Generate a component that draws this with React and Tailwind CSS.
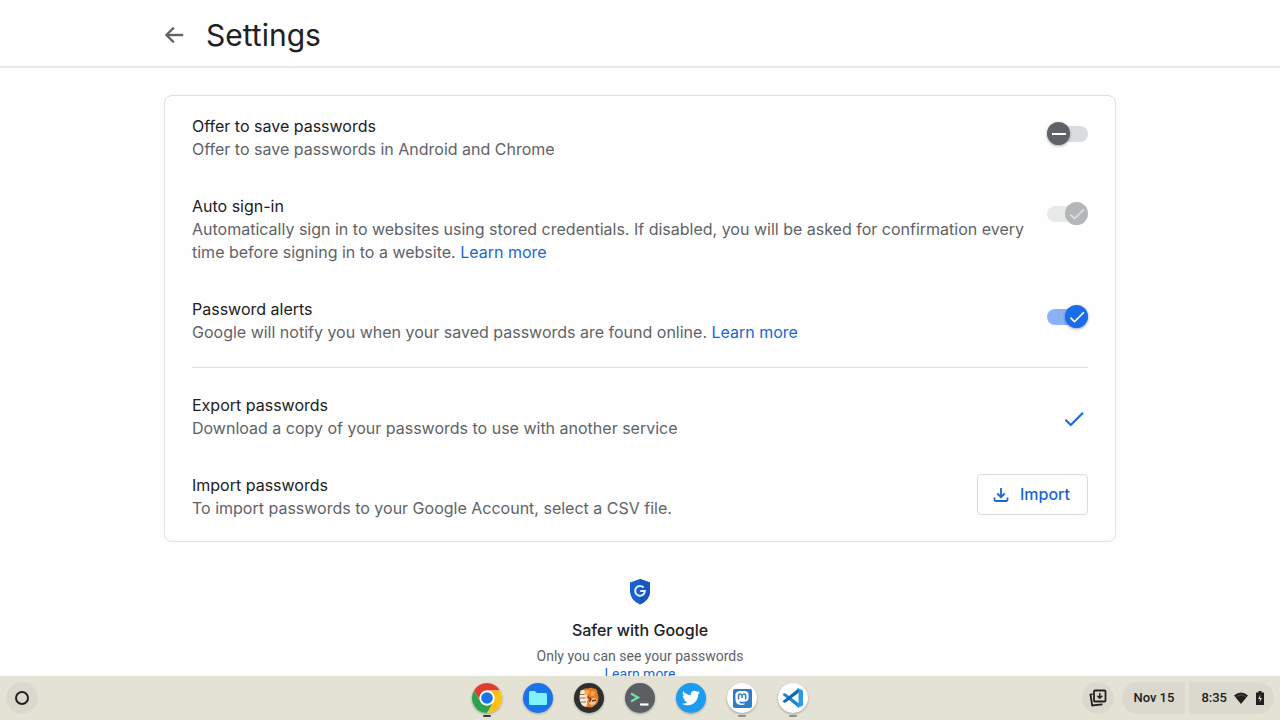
import React from "react";
import { SiMastodon } from "react-icons/si";
import { FaTwitter } from "react-icons/fa";

function Check({ className }) {
  return (
    <svg viewBox="0 0 24 24" className={className} fill="currentColor" aria-hidden="true">
      <path d="M9 16.17 4.83 12l-1.42 1.41L9 19 21 7l-1.41-1.41z" />
    </svg>
  );
}

function Toggle({ id, checked, disabled }) {
  let track = "bg-[#dadce0]";
  let thumb = "left-0 bg-[#5f6368] text-white shadow-[0_1px_3px_rgba(0,0,0,0.35)]";
  if (disabled) {
    track = "bg-[#e8eaea]";
    thumb = "right-0 bg-[#b5b6b8] text-[#dfe0e1]";
  } else if (checked) {
    track = "bg-[#8ab0f6]";
    thumb = "right-0 bg-[#1a6de8] text-white shadow-[0_1px_3px_rgba(0,0,0,0.35)]";
  }
  return (
    <span className="relative mt-[7px] flex h-[23px] w-[41px] shrink-0 items-center">
      <span className={"h-4 flex-1 rounded-full " + track} />
      <span className={"absolute top-0 flex size-[23px] items-center justify-center rounded-full " + thumb}>
        {checked ? <Check className="size-5" /> : <span className="h-[2px] w-3.5 bg-white" />}
      </span>
      <input
        id={id}
        type="checkbox"
        role="switch"
        defaultChecked={checked}
        disabled={disabled}
        className="absolute inset-0 size-full opacity-0"
      />
    </span>
  );
}

function Row({ title, id, children, action }) {
  return (
    <div className="flex justify-between gap-5 py-[17px] text-base leading-[23px]">
      <div>
        {id ? (
          <label htmlFor={id} className="block text-[#202124]">{title}</label>
        ) : (
          <h2 className="text-[#202124]">{title}</h2>
        )}
        <p className="text-[#5f6368]">{children}</p>
      </div>
      {action}
    </div>
  );
}

function LearnMore() {
  return <a href="#learn" className="text-[#1967d2]">Learn more</a>;
}

function ChromeLogo() {
  return (
    <svg viewBox="0 0 32 32" className="size-full">
      <circle cx="16" cy="16" r="15" fill="#fff" />
      <path d="M3 8.5A15 15 0 0 1 29 8.5H16a7.5 7.5 0 0 0-6.5 11.2z" fill="#e33b2e" />
      <path d="M29 8.5A15 15 0 0 1 16 31l6.5-11.3A7.5 7.5 0 0 0 16 8.5z" fill="#fbc116" />
      <path d="M16 31A15 15 0 0 1 3 8.5l6.5 11.2a7.5 7.5 0 0 0 13 0z" fill="#2da14c" />
      <circle cx="16" cy="16" r="7.5" fill="#fff" />
      <circle cx="16" cy="16" r="5.8" fill="#1a73e8" />
    </svg>
  );
}

function FilesLogo() {
  return (
    <svg viewBox="0 0 32 32" className="size-full">
      <circle cx="16" cy="16" r="15" fill="#1a73e8" />
      <path d="M7 10.500Q7 9 8.500 9H13l2 2h8.500q1.500 0 1.500 1.500v9q0 1.500-1.500 1.500h-15Q7 23 7 21.500z" fill="#7df3fa" />
    </svg>
  );
}

function BandicootLogo() {
  return (
    <svg viewBox="0 0 32 32" className="size-full">
      <circle cx="16" cy="16" r="15" fill="#2d2e30" />
      <path d="M9 8q3-2.500 6-1.500 3-1.500 5 0 3-.5 4 2 .500 3 1.500 6 .5 5-2.500 8l-4 3-7-.500-3-3z" fill="#e87a22" />
      <path d="M12.500 8.500q3-1.500 4.500 1l-2.500 4-3-1zM18 9.500q3-1.500 4 1l-1.500 3-3 .500z" fill="#f8a94e" />
      <path d="M7.500 8.500q3-1 4.500.500l-.500 3.500H14l-.500 3.500 1.500.500-1 3.500h.500l-1 4.500q-3.500.500-5-2L7 19l-.500-4z" fill="#f4e9dc" />
      <path d="m17 17 5-1.500 2 2-2 4.500-3.500 1.500-2.500-2z" fill="#efc5a3" />
      <path d="M7 12.500h4.500M7 16h5.500M8 20h5" stroke="#a8673d" strokeWidth="1" />
      <path d="m15 15 3 2-1.500 3M19 19l4-1" stroke="#6e2f16" strokeWidth="1.300" fill="none" />
    </svg>
  );
}

function TerminalLogo() {
  return (
    <svg viewBox="0 0 32 32" className="size-full" fill="none">
      <circle cx="16" cy="16" r="15" fill="#5b5f63" />
      <path d="m7 11.500 7 4-7 4" stroke="#6fdfa5" strokeWidth="2.200" />
      <path d="M16 22.500h8.500" stroke="#fff" strokeWidth="2.200" />
    </svg>
  );
}

function CodeLogo() {
  return (
    <svg viewBox="0 0 32 32" className="size-full">
      <circle cx="16" cy="16" r="15" fill="#fff" />
      <path d="m5.500 12.800 1.600-1.500 1.500.100L22 21.500V26z" fill="#1b85cf" />
      <path d="m5.500 19.200 1.600 1.500 1.500-.100L22 10.500V6z" fill="#0b6bb4" />
      <path d="m20.500 6 5.500 2.500v15L20.500 26l1-3V9z" fill="#2b9be6" />
    </svg>
  );
}

const apps = [
  { name: "Chrome", logo: <ChromeLogo />, mark: "bg-[#3c3c3a]" },
  { name: "Files", logo: <FilesLogo />, mark: "bg-transparent" },
  { name: "Game", logo: <BandicootLogo />, mark: "bg-transparent" },
  { name: "Terminal", logo: <TerminalLogo />, mark: "bg-transparent" },
  {
    name: "Twitter",
    logo: (
      <span className="m-px flex flex-1 items-center justify-center self-stretch rounded-full bg-[#1d9bf0]">
        <FaTwitter className="size-[18px] text-white" />
      </span>
    ),
    mark: "bg-transparent",
  },
  {
    name: "Mastodon",
    logo: (
      <span className="m-px flex flex-1 items-center justify-center self-stretch rounded-full bg-white">
        <span className="flex size-[19px] items-center justify-center rounded-xs bg-[#2f7dc9]">
          <SiMastodon className="size-3.5 text-white" />
        </span>
      </span>
    ),
    mark: "bg-[#92918a]",
  },
  { name: "Visual Studio Code", logo: <CodeLogo />, mark: "bg-[#92918a]" },
];

function Shelf() {
  return (
    <footer className="grid h-11 shrink-0 grid-cols-[1fr_auto_1fr] items-center bg-[#e4e2d5] px-[6px] font-[Roboto,sans-serif] text-[13px] font-medium text-[#202020]">
      <button aria-label="Launcher" className="flex size-8 items-center justify-center rounded-full bg-[#dbd9cd]">
        <span className="size-3.5 rounded-full border-2 border-[#202020]" />
      </button>
      <nav className="flex gap-[19px]">
        {apps.map((app) => (
          <button key={app.name} aria-label={app.name} className="flex h-11 flex-col items-center pt-[6px]">
            <span className="flex size-8 rounded-full drop-shadow-[0_1px_1px_rgba(0,0,0,0.3)]">{app.logo}</span>
            <span className={"mt-px h-[2px] w-2 rounded-full " + app.mark} />
          </button>
        ))}
      </nav>
      <div className="flex items-center justify-end gap-1">
        <button aria-label="Holding space" className="mr-1 flex size-8 items-center justify-center rounded-full bg-[#dbd9cd]">
          <svg viewBox="0 0 20 20" className="size-5" fill="none" stroke="#202020" strokeWidth="1.800">
            <rect x="6" y="2.500" width="11.500" height="11" rx="1" />
            <path d="m4.500 6.200-2 .400 1.700 10.900 10.300-1.100" />
            <path d="M11.800 5v5M9.300 7.800l2.500 2.500 2.500-2.500" strokeWidth="1.500" />
          </svg>
        </button>
        <button className="h-8 rounded-l-full rounded-r-sm bg-[#dbd9cd] px-[11px]">Nov 15</button>
        <button className="flex h-8 items-center rounded-l-sm rounded-r-full bg-[#dbd9cd] pr-[9px] pl-3">
          8:35
          <svg viewBox="0 0 16 14" className="ml-[6px] h-3.5 w-4" aria-label="Wi-Fi">
            <path d="M1 4.500Q8-1.500 15 4.500L8 13z" fill="#202020" />
            <path d="M2.800 5.800Q8 2 13.200 5.800" stroke="#77756d" strokeWidth=".6" fill="none" />
          </svg>
          <svg viewBox="0 0 10 14" className="ml-[6px] h-3.5 w-2.5" aria-label="Battery">
            <path d="M3.500 0h3v1.500H9V14H1V1.500h2.500z" fill="#202020" />
            <path d="M5.500 3.500 3 8h2l-.5 3.500L7 7H5z" fill="#dbd9cd" />
          </svg>
        </button>
      </div>
    </footer>
  );
}

export default function App() {
  return (
    <div className="flex h-screen flex-col overflow-hidden bg-[#fefefe] font-[Inter,sans-serif]">
      <header className="shrink-0 border-b-2 border-[#e8e9ea] px-6">
        <div className="mx-auto flex h-[66px] max-w-[952px] items-center gap-5 pt-1">
          <button aria-label="Back" className="text-[#5f6368]">
            <svg viewBox="0 0 24 24" className="-ml-[2px] size-6" fill="currentColor" stroke="currentColor" strokeWidth=".4">
              <path d="M21 11H6.830l5.590-5.590L11 4l-8 8 8 8 1.410-1.410L6.830 13H21z" />
            </svg>
          </button>
          <h1 className="text-[30px] leading-10 text-[#202124]">Settings</h1>
        </div>
      </header>
      <main className="min-h-0 flex-1 overflow-hidden px-6 pt-[27px]">
        <section className="mx-auto max-w-[952px] rounded-lg border border-[#dfe0e2] px-[27px] pt-[2px] pb-1">
          <Row title="Offer to save passwords" id="offer" action={<Toggle id="offer" />}>
            Offer to save passwords in Android and Chrome
          </Row>
          <Row title="Auto sign-in" id="auto" action={<Toggle id="auto" checked disabled />}>
            Automatically sign in to websites using stored credentials. If disabled, you will be asked for confirmation every
            time before signing in to a website. <LearnMore />
          </Row>
          <Row title="Password alerts" id="alerts" action={<Toggle id="alerts" checked />}>
            Google will notify you when your saved passwords are found online. <LearnMore />
          </Row>
          <hr className="mt-[6px] mb-[9px] border-[#dfe0e2]" />
          <Row title="Export passwords" action={<Check className="mt-3 mr-px size-[26px] shrink-0 text-[#1a6ddb]" />}>
            Download a copy of your passwords to use with another service
          </Row>
          <Row
            title="Import passwords"
            action={
              <button className="flex h-[41px] shrink-0 items-center gap-2.5 rounded-sm border border-[#dadce0] pr-[17px] pl-3.5 font-medium text-[#1967d2]">
                <svg viewBox="0 0 18 18" className="size-[18px]" fill="none" stroke="currentColor" strokeWidth="1.800">
                  <path d="M9 2v9M5.300 7.500 9 11.200l3.700-3.700M2.500 11.500v2.300q0 1.200 1.200 1.200h10.600q1.200 0 1.200-1.200v-2.300" />
                </svg>
                Import
              </button>
            }
          >
            To import passwords to your Google Account, select a CSV file.
          </Row>
        </section>
        <section className="flex flex-col items-center pt-9 text-center">
          <svg viewBox="0 0 24 28" className="h-7 w-6" aria-hidden="true">
            <path d="M12 1 22 4.500V13q0 9-10 13.500Q2 22 2 13V4.500z" fill="#1a5fd0" />
            <path d="M12 1 22 4.500V13q0 9-10 13.500z" fill="#1655bd" />
            <path d="M15.600 9.500A4.900 4.900 0 1 0 16.900 13H12.200" stroke="#e4efff" strokeWidth="2" fill="none" />
          </svg>
          <h2 className="mt-3 text-base leading-6 font-medium text-[#202124]">Safer with Google</h2>
          <p className="mt-[5px] font-[Roboto,sans-serif] text-sm leading-[18px] text-[#5f6368]">Only you can see your passwords</p>
          <a href="#safer" className="font-[Roboto,sans-serif] text-sm leading-[18px] text-[#1967d2]">Learn more</a>
        </section>
      </main>
      <Shelf />
    </div>
  );
}
